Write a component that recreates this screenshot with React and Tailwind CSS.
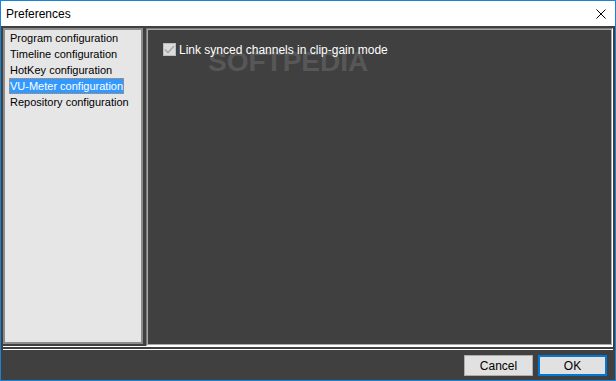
import React, { useState } from 'react';

const items = [
  'Program configuration',
  'Timeline configuration',
  'HotKey configuration',
  'VU-Meter configuration',
  'Repository configuration',
];

const font = { fontFamily: '"Liberation Sans", Arial, sans-serif' };

export default function App() {
  const [selected, setSelected] = useState(3);
  const [linked, setLinked] = useState(true);

  return (
    <div className="w-[616px] h-[381px] flex flex-col border border-[#1883d7] bg-[#404040] overflow-hidden select-none" style={font}>
      {/* Title bar */}
      <div className="h-[25px] shrink-0 bg-white flex items-center justify-between pl-[5px] pr-[8px]">
        <span className="text-[12px] text-black leading-none">Preferences</span>
        <svg width="10" height="10" viewBox="0 0 10 10" className="mr-[1px]">
          <path d="M0.5 0.5 L9.5 9.5 M9.5 0.5 L0.5 9.5" stroke="#000" strokeWidth="1" />
        </svg>
      </div>

      {/* Content */}
      <div className="flex gap-[3px] pt-[2px] pl-[2px] pr-[2px] h-[320px] shrink-0">
        {/* Page list */}
        <div className="w-[140px] h-[316px] bg-[#e6e6e6] border-2 border-[#8c8c8c] pt-[0px] pl-[4px]">
          {items.map((it, i) => (
            <div
              key={it}
              onClick={() => setSelected(i)}
              className={`h-[16px] flex items-center text-[11px] leading-none px-[1px] w-fit cursor-default ${
                i === selected
                  ? 'bg-[#3399ff] text-white outline outline-1 outline-dotted outline-[#e08a2a] -outline-offset-1'
                  : 'text-black'
              }`}
            >
              {it}
            </div>
          ))}
        </div>

        {/* Settings page */}
        <div className="flex-1 h-[318px] border border-t-[#7a7a7a] border-l-[#7a7a7a] border-r-white border-b-white">
          <div className="relative h-full border border-[#a8a8a8] bg-[#404040] pt-[13px] pl-[15px]">
            <span className="absolute left-[60px] top-[18px] text-[28px] font-bold tracking-[0px] text-[#575757] leading-none pointer-events-none">
              SOFTPEDIA
            </span>
            <label className="relative flex items-center gap-[3px] cursor-default" onClick={() => setLinked(!linked)}>
              <span className="w-[13px] h-[13px] bg-[#dcdcdc] border border-[#bcbcbc] flex items-center justify-center">
                {linked && (
                  <svg width="11" height="9" viewBox="0 0 11 9">
                    <path d="M1 4.5 L4 7.5 L10 1" fill="none" stroke="#a9a9a9" strokeWidth="1.6" />
                  </svg>
                )}
              </span>
              <span className="text-[12px] text-white leading-none">Link synced channels in clip-gain mode</span>
            </label>
          </div>
        </div>
      </div>

      {/* Separator */}
      <div className="mx-[2px] mt-[0px] h-[4px] shrink-0 border-t border-b border-white" />

      {/* Footer */}
      <div className="flex-1 flex justify-end items-start gap-[5px] pt-[5px] pr-[8px]">
        <button className="w-[69px] h-[21px] bg-[#e1e1e1] border border-[#adadad] text-[12px] text-black leading-none">
          Cancel
        </button>
        <button className="w-[69px] h-[21px] bg-[#e1e1e1] border-2 border-[#0078d7] text-[12px] text-black leading-none">
          OK
        </button>
      </div>
    </div>
  );
}
